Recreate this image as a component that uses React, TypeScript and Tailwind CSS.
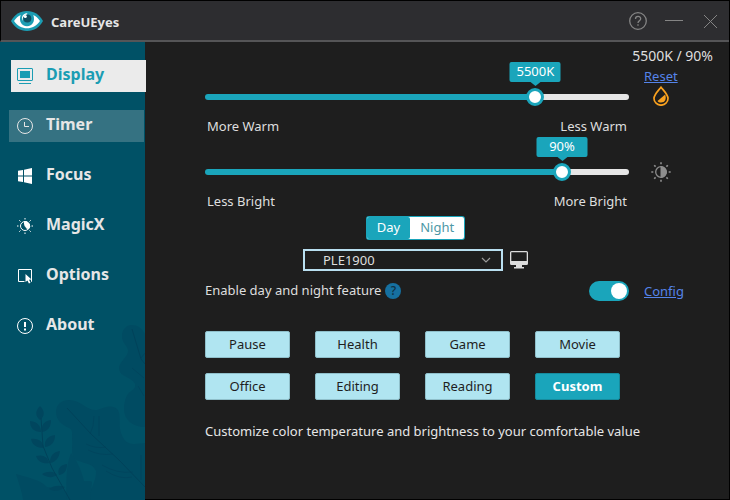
import { useState } from 'react';
import type { ReactNode } from 'react';
import clsx from 'clsx';

const THUMB = 18;

const PRESETS = ['Pause', 'Health', 'Game', 'Movie', 'Office', 'Editing', 'Reading', 'Custom'];

const HINTS: Record<string, string> = {
  Custom: 'Customize color temperature and brightness to your comfortable value',
};

function EyeLogo() {
  return (
    <svg width="32" height="20" viewBox="0 0 32 20" aria-hidden>
      <path d="M0 10C3.500 3.500 9 0 16 0s12.500 3.500 16 10c-3.500 6.500-9 10-16 10S3.500 16.500 0 10Z" fill="#1b9db3" />
      <path d="M3 10C5 7 7.200 5.200 9.700 4c-2.200 6 .8 11.200 6.300 11.200S24.500 10 22.300 4c2.500 1.200 4.700 3 6.700 6-3.500 4.800-7.800 7.300-13 7.300S6.500 14.800 3 10Z" fill="#fff" />
      <circle cx="16.300" cy="7.500" r="4" fill="#0f4f62" />
      <path d="M11.800 10C9.800 6.500 11.500 2.800 15.800 2.200c.8 0 .8 1 .1 1.200-3 .8-4.600 2.800-4.100 6.600Z" fill="#fff" />
      <circle cx="14.300" cy="5.600" r="1.500" fill="#fff" />
    </svg>
  );
}

function DisplayIcon() {
  return (
    <svg width="16" height="16" viewBox="0 0 16 16" fill="none" aria-hidden>
      <rect x=".5" y=".5" width="15" height="12" rx=".5" stroke="currentColor" />
      <rect x="3" y="3" width="10" height="7" fill="currentColor" />
      <path d="M2 15.500h12" stroke="currentColor" />
    </svg>
  );
}

function ClockIcon() {
  return (
    <svg width="16" height="16" viewBox="0 0 16 16" fill="none" stroke="currentColor" aria-hidden>
      <circle cx="8" cy="8" r="7.500" />
      <path d="M7.500 4v4.500H12" />
    </svg>
  );
}

function WindowsIcon() {
  return (
    <svg width="16" height="16" viewBox="0 0 16 16" fill="#fff" aria-hidden>
      <path d="M1 2.800L6 2v5.500H1zM7 1.800L15 0v7.500H7zM1 8.500h5V14l-5-.8zM7 8.500h8V16l-8-1.800z" />
    </svg>
  );
}

function MagicIcon() {
  return (
    <svg width="16" height="16" viewBox="0 0 16 16" fill="none" stroke="#fff" aria-hidden>
      <circle cx="8" cy="8" r="4.500" />
      <path d="M7.500 3.500a4.500 4.500 0 0 1 4 7.500C9 10.500 7 7.500 7.500 3.500Z" fill="#fff" />
      <path d="M8 0v1.500M8 14.500V16M0 8h1.500M14.500 8H16M2.300 2.300l1.200 1.200M12.500 12.500l1.200 1.200M13.700 2.300l-1.200 1.200M3.500 12.500l-1.200 1.200" />
    </svg>
  );
}

function OptionsIcon() {
  return (
    <svg width="16" height="16" viewBox="0 0 16 16" fill="none" aria-hidden>
      <path d="M7.500 13.500h-6V1.500h13v12H14" stroke="#fff" />
      <path d="M8.500 6l6 5.500-2.500.3 1.500 3-1.600.7-1.400-3-2 1.500Z" fill="#fff" />
    </svg>
  );
}

function AboutIcon() {
  return (
    <svg width="16" height="16" viewBox="0 0 16 16" fill="none" stroke="#fff" aria-hidden>
      <circle cx="8" cy="8" r="7.500" />
      <path d="M8 4v5M8 10.500v2" strokeWidth="2" />
    </svg>
  );
}

function DropIcon() {
  return (
    <svg width="16" height="20" viewBox="0 0 16 20" fill="none" aria-hidden>
      <path d="M8 1.200C10.500 4.500 15 8.500 15 12.500a7 6.700 0 0 1-14 0C1 8.500 5.500 4.500 8 1.200Z" stroke="#f9a11f" strokeWidth="1.700" />
      <path d="M12.200 8.500c1.500 4.500-.2 8-4.200 8-1.500 0-2.700-.5-3.500-1.500Z" fill="#f9a11f" />
    </svg>
  );
}

function BrightnessIcon() {
  return (
    <svg width="20" height="20" viewBox="0 0 20 20" fill="none" stroke="#8e8e8e" aria-hidden>
      <circle cx="10" cy="10" r="5.300" strokeWidth="1.300" />
      <path d="M10 4.700a5.300 5.300 0 0 1 0 10.600Z" fill="#8e8e8e" />
      <path d="M10 .3v2M10 17.700v2M.3 10h2M17.700 10h2M3.200 3.200l1.400 1.400M15.400 15.400l1.400 1.400M16.800 3.200l-1.400 1.400M4.600 15.400l-1.400 1.400" strokeWidth="1.600" />
    </svg>
  );
}

function MonitorIcon() {
  return (
    <svg width="18" height="18" viewBox="0 0 18 18" fill="#dcdcdc" aria-hidden>
      <path fillRule="evenodd" d="M1.500 0h15A1.500 1.500 0 0 1 18 1.500v11a1.500 1.500 0 0 1-1.500 1.500H12v2h2v1.500H4V16h2v-2H1.500A1.500 1.500 0 0 1 0 12.500v-11A1.500 1.500 0 0 1 1.500 0ZM1.300 1.300v8.700h15.400V1.300Z" />
    </svg>
  );
}

// faint foliage at the foot of the sidebar
function Foliage() {
  return (
    <svg className="absolute right-0 bottom-0" width="145" height="180" viewBox="0 0 145 180" fill="#004b62" aria-hidden>
      <path d="M145 14C142 8 137 5 132 5c-7 0-10 6-10 11 0 7 5 9 6 14 1 6-9 12-9 18 0 7 7 8 11 11 3 2 6 4 5 8-1 3-5 4-7 7-3 4-4 10-4 15 0 11 9 18 21 18Z" />
      <path d="M56 92c0-8 6-12 13-12 12 0 18 11 28 10 7-2 14-6 20-1 4 4 2 13 3 20 2 10 7 16 15 15l10-1v57H88c1-9 9-20 8-29-3-8-11-7-20-11-6-4-3-14-4-22 0-5 1-8-3-10-7-3-13-8-13-16Z" />
      <path d="M16 154c14 4 24 6 31 13l16 2 8 11H23c-1-9-4-16-7-26Z" />
      <path d="M71 133c6 8 10 16 13 28 3 1 5-1 8 1l-2 18H66c1-14-1-33 5-47Z" />
      <g fill="#00465e">
        <path d="M40 86c5 5 5 10 0 14-5-4-5-9 0-14ZM30 101c8 1 11 5 11 11-7 0-11-4-11-11ZM51 100c0 7-3 11-9 12-1-7 2-11 9-12ZM31 119c8-1 12 3 13 9-7 0-12-3-13-9ZM55 115c0 7-3 11-10 12-1-7 3-11 10-12ZM36 136c7-2 12 1 13 7-6 1-11-1-13-7ZM60 131c-1 7-4 11-10 12 0-7 3-11 10-12ZM42 154c6-3 12-3 15 1-4 3-10 3-15-1ZM67 144c0 6-2 10-8 11-2-6 1-10 8-11ZM49 169c5-4 11-4 16-2-4 4-11 5-16 2Z" />
      </g>
      <g fill="none" stroke="#00425a">
        <path d="M41 98l2 28 9 22 18 32M67 88l24 26 28 26 26 27M132 9l9 30 4 5" />
        <path d="M94 96q0 11-4 18M99 96v20M86 124q10 5 20 3M88 130q12 6 25 4M102 145q15 9 31 7M106 151q14 9 26 6M141 135v25M145 33l-4 5M132 48l12 10M138 66l6 10" strokeWidth=".6" />
      </g>
    </svg>
  );
}

const NAV: { label: string; icon: ReactNode }[] = [
  { label: 'Display', icon: <DisplayIcon /> },
  { label: 'Timer', icon: <ClockIcon /> },
  { label: 'Focus', icon: <WindowsIcon /> },
  { label: 'MagicX', icon: <MagicIcon /> },
  { label: 'Options', icon: <OptionsIcon /> },
  { label: 'About', icon: <AboutIcon /> },
];

type SliderProps = {
  label: string;
  min: number;
  max: number;
  step: number;
  value: number;
  unit: string;
  low: string;
  high: string;
  onChange: (v: number) => void;
};

function Slider({ label, min, max, step, value, unit, low, high, onChange }: SliderProps) {
  const ratio = (value - min) / (max - min);
  const pos = `calc(${THUMB / 2}px + (100% - ${THUMB}px) * ${ratio})`;

  return (
    <div>
      <div className="relative flex h-[18px] items-center">
        <input
          type="range"
          aria-label={label}
          min={min}
          max={max}
          step={step}
          value={value}
          onChange={(e) => onChange(Number(e.target.value))}
          className="h-[6px] w-full cursor-pointer appearance-none rounded-full [&::-webkit-slider-thumb]:size-[18px] [&::-webkit-slider-thumb]:appearance-none [&::-webkit-slider-thumb]:rounded-full [&::-webkit-slider-thumb]:border-3 [&::-webkit-slider-thumb]:border-[#1aa5bb] [&::-webkit-slider-thumb]:bg-white"
          style={{ background: `linear-gradient(to right, #1aa5bb ${pos}, #e6e6e6 ${pos})` }}
        />
        <div
          className="pointer-events-none absolute bottom-6 flex h-5 w-[51px] -translate-x-1/2 items-center justify-center rounded-xs bg-[#1aa5bb] text-[13px] text-white"
          style={{ left: pos }}
        >
          {value}
          {unit}
          <span className="absolute top-full left-1/2 -translate-x-1/2 border-x-5 border-t-4 border-x-transparent border-t-[#1aa5bb]" />
        </div>
      </div>
      <div className="mt-2.5 flex justify-between px-0.5 leading-5">
        <span>{low}</span>
        <span>{high}</span>
      </div>
    </div>
  );
}

export default function App() {
  const [page, setPage] = useState('Display');
  const [hovered, setHovered] = useState('Timer');
  const [kelvin, setKelvin] = useState(5500);
  const [brightness, setBrightness] = useState(90);
  const [mode, setMode] = useState('Day');
  const [auto, setAuto] = useState(true);
  const [preset, setPreset] = useState('Custom');

  function reset() {
    setKelvin(5500);
    setBrightness(90);
  }

  return (
    <div className="flex h-dvh flex-col border-t border-r border-black bg-[#1e1e1e] font-['Noto_Sans','Open_Sans',sans-serif] text-[13px] text-[#dedede]">
      <header className="flex h-[41px] shrink-0 items-center border-b-2 border-l border-b-[#555557] border-l-black bg-[#2d2d30] px-2.5">
        <EyeLogo />
        <h1 className="ml-2 pt-1 text-[13px] font-bold text-[#e6e6e6]">CareUEyes</h1>
        <div className="ml-auto flex items-center gap-[18px] text-[#858585]">
          <button aria-label="Help">
            <svg width="18" height="18" viewBox="0 0 18 18" fill="none" stroke="currentColor" strokeWidth="1.300" aria-hidden>
              <circle cx="9" cy="9" r="8.300" />
              <path d="M6.500 7c0-3.500 5.200-3.300 5.200-.3 0 2-2.700 2.100-2.700 4.300M9 12.300v1.500" />
            </svg>
          </button>
          <button aria-label="Minimize">
            <svg width="18" height="18" viewBox="0 0 18 18" stroke="currentColor" aria-hidden>
              <path d="M0 8.500h18" />
            </svg>
          </button>
          <button aria-label="Close">
            <svg width="18" height="18" viewBox="0 0 18 18" stroke="currentColor" aria-hidden>
              <path d="M3 3l13 13M16 3L3 16" />
            </svg>
          </button>
        </div>
      </header>

      <div className="flex min-h-0 flex-1">
        <nav className="relative flex w-[145px] shrink-0 flex-col gap-[18px] bg-[#005166] pt-[18px]">
          <Foliage />
          {NAV.map(({ label, icon }) => (
            <button
              key={label}
              onClick={() => setPage(label)}
              onMouseEnter={() => setHovered(label)}
              className={clsx(
                'relative flex h-8 items-center gap-[13px] text-left text-base font-bold',
                page === label ? '-mr-px ml-[11px] bg-[#ebebeb] pl-1.5 text-[#1b9db3]' : 'mr-px ml-[9px] pl-2 text-[#e6e6e6]',
                page !== label && hovered === label && 'bg-[#357282]',
              )}
            >
              {icon}
              <span className="pb-1">{label}</span>
            </button>
          ))}
        </nav>

        <main className="grid min-w-0 flex-1 grid-cols-[1fr_100px] content-start border-b border-black pl-[60px]">
          <output className="col-span-2 pt-1 pr-4 text-right text-sm leading-5">
            {kelvin}K / {brightness}%
          </output>

          <div className="pt-[22px]">
            <Slider label="Color temperature" min={1700} max={6500} step={100} value={kelvin} unit="K" low="More Warm" high="Less Warm" onChange={setKelvin} />
          </div>
          <div className="flex flex-col items-start pl-[15px]">
            <a href="#reset" onClick={reset} className="leading-5 text-[#5584ea] underline">
              Reset
            </a>
            <div className="ml-[9px]">
              <DropIcon />
            </div>
          </div>

          <div className="pt-[27px]">
            <Slider label="Brightness" min={30} max={100} step={1} value={brightness} unit="%" low="Less Bright" high="More Bright" onChange={setBrightness} />
          </div>
          <div className="pt-[26px] pl-[22px]">
            <BrightnessIcon />
          </div>

          <div className="mt-1.5 flex flex-col items-center gap-2.5 pr-[3px]">
            <div className="flex h-[22px] rounded-xs bg-white ring-1 ring-[#1aa5bb]">
              {['Day', 'Night'].map((m) => (
                <button
                  key={m}
                  onClick={() => setMode(m)}
                  aria-pressed={mode === m}
                  className={clsx('rounded-xs px-2.5', mode === m ? 'bg-[#1aa5bb] text-white' : 'text-[#4d98a6]')}
                >
                  {m}
                </button>
              ))}
            </div>
            <div className="flex items-center gap-[7px]">
              <div className="relative">
                <select aria-label="Monitor" className="block h-[22px] w-[200px] appearance-none border-2 border-[#b9dff0] bg-[#1e1e1e] pl-[18px] leading-4">
                  <option>PLE1900</option>
                </select>
                <svg className="pointer-events-none absolute top-2 right-3" width="10" height="7" viewBox="0 0 10 7" fill="none" stroke="#9a9a9a" strokeWidth="1.200" aria-hidden>
                  <path d="M1 1l4 4 4-4" />
                </svg>
              </div>
              <MonitorIcon />
            </div>
          </div>

          <div className="col-start-1 mt-2.5 flex h-5 items-center">
            <label htmlFor="auto">Enable day and night feature</label>
            <button aria-label="About this feature" className="ml-1 size-4 rounded-full bg-[#1670a0] text-[12px] leading-4 font-medium text-[#0f2f42]">
              ?
            </button>
            <input
              id="auto"
              type="checkbox"
              role="switch"
              checked={auto}
              onChange={(e) => setAuto(e.target.checked)}
              className="ml-auto flex h-5 w-10 cursor-pointer appearance-none items-center rounded-full bg-gray-500 px-0.5 before:size-4 before:rounded-full before:bg-white checked:justify-end checked:bg-[#1aa5bb]"
            />
          </div>
          <a href="#config" className="mt-2.5 justify-self-start pl-[15px] leading-5 text-[#5584ea] underline">
            Config
          </a>

          <div className="mt-[30px] grid grid-cols-4 gap-x-[25px] gap-y-[15px] pr-[9px]">
            {PRESETS.map((name) => (
              <button
                key={name}
                onClick={() => setPreset(name)}
                className={clsx(
                  'h-[27px] rounded-xs border',
                  preset === name ? 'border-[#168b9d] bg-[#1aa5bb] font-bold text-white' : 'border-[#8fbfca] bg-[#b0e5f1] text-[#1e1e1e]',
                )}
              >
                {name}
              </button>
            ))}
          </div>

          <p className="col-span-2 mt-[21px] leading-5 text-[#e6e6e6]">{HINTS[preset]}</p>
        </main>
      </div>
    </div>
  );
}
